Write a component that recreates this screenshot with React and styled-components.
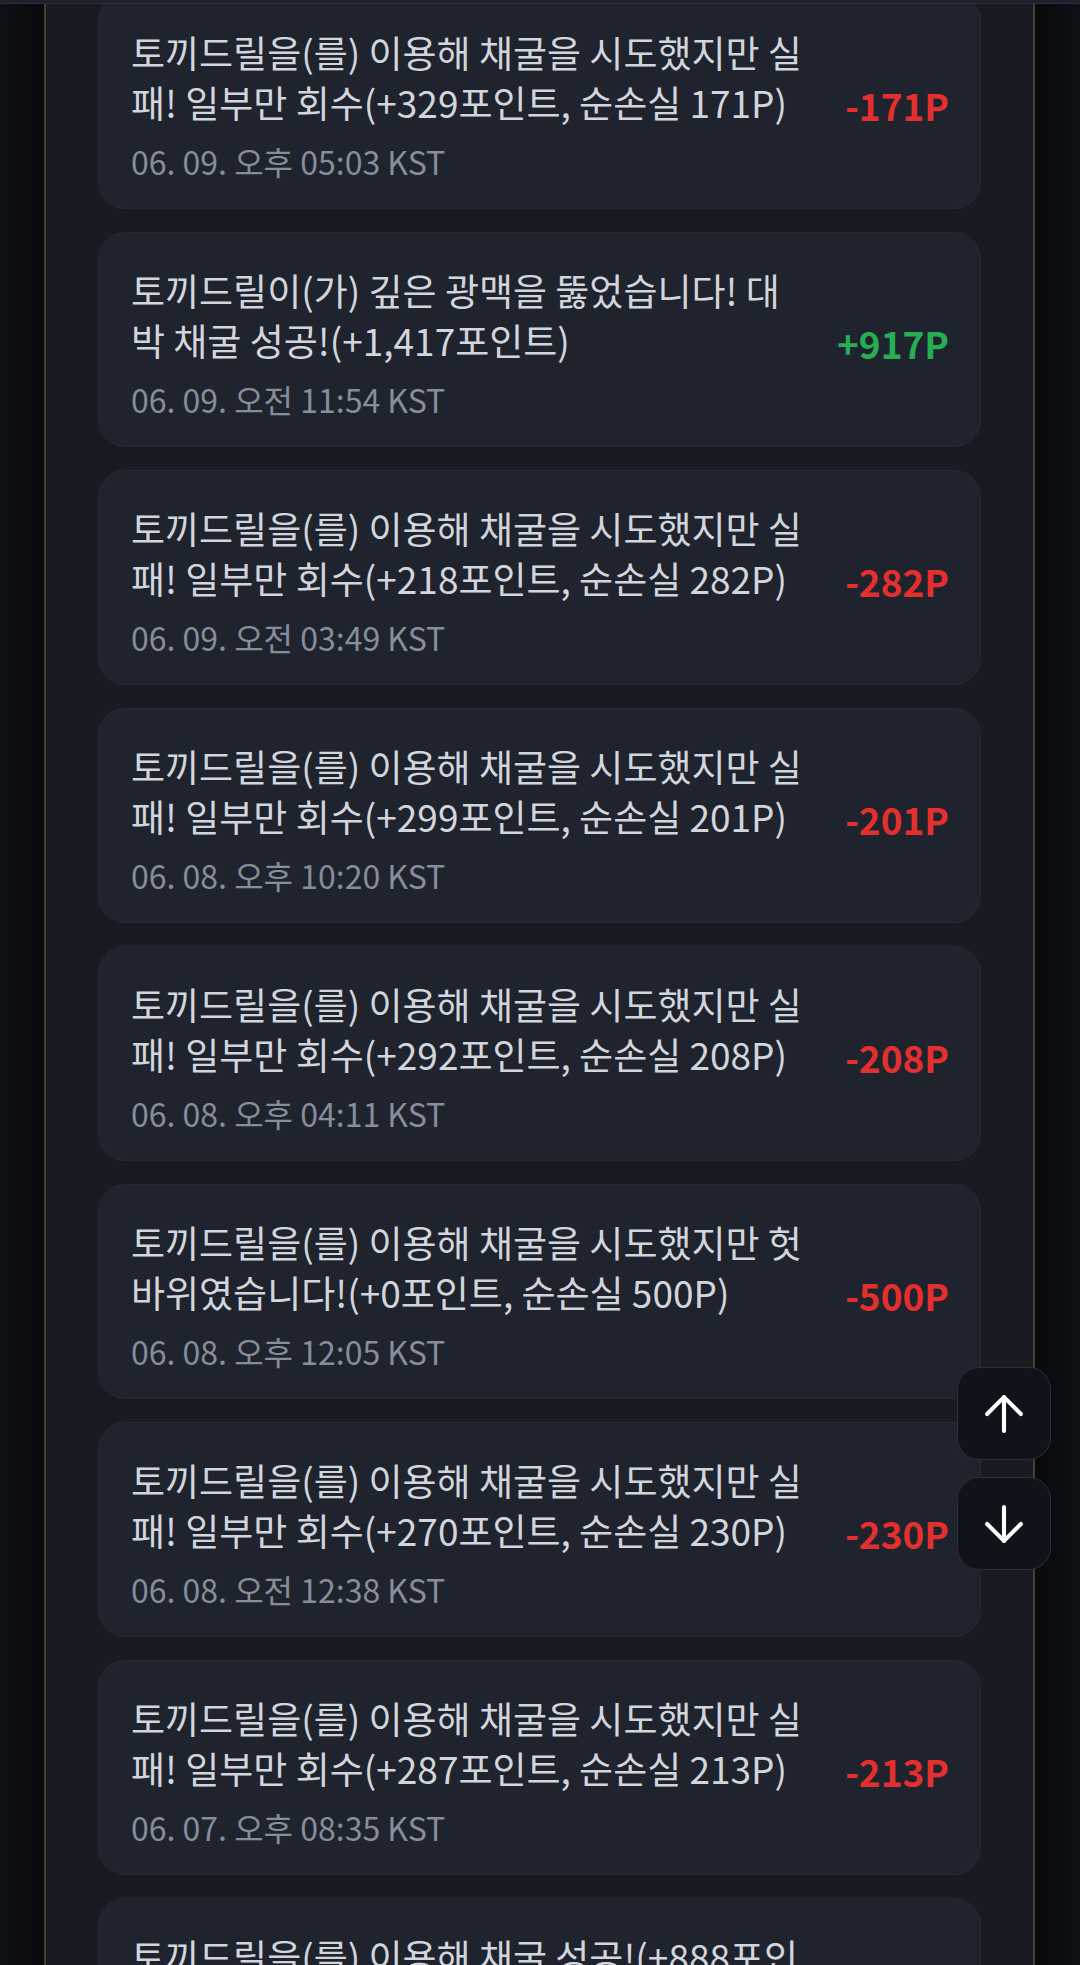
import styled, { createGlobalStyle } from "styled-components";
import { ArrowUp, ArrowDown } from "lucide-react";

const GlobalStyle = createGlobalStyle`
    html, body {
        margin:0;
        padding:0;
        background:#0b0d11;
        font-family:"Noto Sans CJK KR", "Noto Sans", sans-serif;
    }
`;

// 줄바꿈 위치는 화면과 맞추기 위해 \n 으로 지정
const logs = [
    { text: "토끼드릴을(를) 이용해 채굴을 시도했지만 실\n패! 일부만 회수(+329포인트, 순손실 171P)", date: "06. 09. 오후 05:03 KST", amount: -171 },
    { text: "토끼드릴이(가) 깊은 광맥을 뚫었습니다! 대\n박 채굴 성공!(+1,417포인트)", date: "06. 09. 오전 11:54 KST", amount: 917 },
    { text: "토끼드릴을(를) 이용해 채굴을 시도했지만 실\n패! 일부만 회수(+218포인트, 순손실 282P)", date: "06. 09. 오전 03:49 KST", amount: -282 },
    { text: "토끼드릴을(를) 이용해 채굴을 시도했지만 실\n패! 일부만 회수(+299포인트, 순손실 201P)", date: "06. 08. 오후 10:20 KST", amount: -201 },
    { text: "토끼드릴을(를) 이용해 채굴을 시도했지만 실\n패! 일부만 회수(+292포인트, 순손실 208P)", date: "06. 08. 오후 04:11 KST", amount: -208 },
    { text: "토끼드릴을(를) 이용해 채굴을 시도했지만 헛\n바위였습니다!(+0포인트, 순손실 500P)", date: "06. 08. 오후 12:05 KST", amount: -500 },
    { text: "토끼드릴을(를) 이용해 채굴을 시도했지만 실\n패! 일부만 회수(+270포인트, 순손실 230P)", date: "06. 08. 오전 12:38 KST", amount: -230 },
    { text: "토끼드릴을(를) 이용해 채굴을 시도했지만 실\n패! 일부만 회수(+287포인트, 순손실 213P)", date: "06. 07. 오후 08:35 KST", amount: -213 },
    { text: "토끼드릴을(를) 이용해 채굴 성공!(+888포인\n트)", date: "06. 07. 오후 04:02 KST", amount: 388 },
];

const App = () => {
    return (
        <>
            <GlobalStyle />
            <Page>
                <TopBar />
                <Frame>
                    <List>
                        {logs.map((log, i) => (
                            <Card key={i}>
                                <Body>
                                    <Title>{log.text}</Title>
                                    <Time>{log.date}</Time>
                                </Body>
                                <Amount $plus={log.amount > 0}>
                                    {log.amount > 0 ? `+${log.amount}` : log.amount}P
                                </Amount>
                            </Card>
                        ))}
                    </List>
                </Frame>
            </Page>
            <ScrollButtons>
                <ScrollBtn aria-label="맨 위로"><ArrowUp size={58} strokeWidth={1.7} /></ScrollBtn>
                <ScrollBtn aria-label="맨 아래로"><ArrowDown size={58} strokeWidth={1.7} /></ScrollBtn>
            </ScrollButtons>
        </>
    );
}

const Page = styled.div`
    height:1965px;
    overflow:hidden;
    display:flex;
    flex-direction:column;
    background:linear-gradient(90deg, #0d1015 0%, #08090c 4%, #08090c 96%, #0d1015 100%);
`;

const TopBar = styled.div`
    position:relative;
    z-index:2;
    height:3px;
    flex-shrink:0;
    background:#1c212b;
    border-bottom:1px solid #2a303b;
`;

const Frame = styled.main`
    flex:1;
    margin:0 45px 0 44px;
    border-left:2px solid #4a3f2c;
    border-right:2px solid #4a3f2c;
    background:#181b22;
    padding:0 52px;
`;

const List = styled.div`
    display:flex;
    flex-direction:column;
    gap:23px;
    margin-top:-10px;
`;

const Card = styled.div`
    display:flex;
    align-items:center;
    gap:24px;
    background:#1f232e;
    border:1px solid #242936;
    border-radius:27px;
    padding:32px 31px 25px 32px;
`;

const Body = styled.div`
    flex:1;
    min-width:0;
`;

const Title = styled.div`
    font-size:37px;
    line-height:50px;
    color:#d2d5dc;
    white-space:pre-line;
`;

const Time = styled.div`
    margin-top:12px;
    font-size:32px;
    line-height:44px;
    color:#868d9b;
`;

const Amount = styled.div`
    flex-shrink:0;
    font-size:37px;
    font-weight:700;
    color:${props => props.$plus ? "#27ad52" : "#e3302f"};
`;

const ScrollButtons = styled.div`
    position:fixed;
    right:29px;
    top:1367px;
    display:flex;
    flex-direction:column;
    gap:17px;
    z-index:5;
`;

const ScrollBtn = styled.button`
    width:94px;
    height:93px;
    border-radius:22px;
    background:#10131a;
    border:1.5px solid #2b2f38;
    color:#fff;
    display:flex;
    align-items:center;
    justify-content:center;
    padding:0;
    cursor:pointer;
`;

export default App;
